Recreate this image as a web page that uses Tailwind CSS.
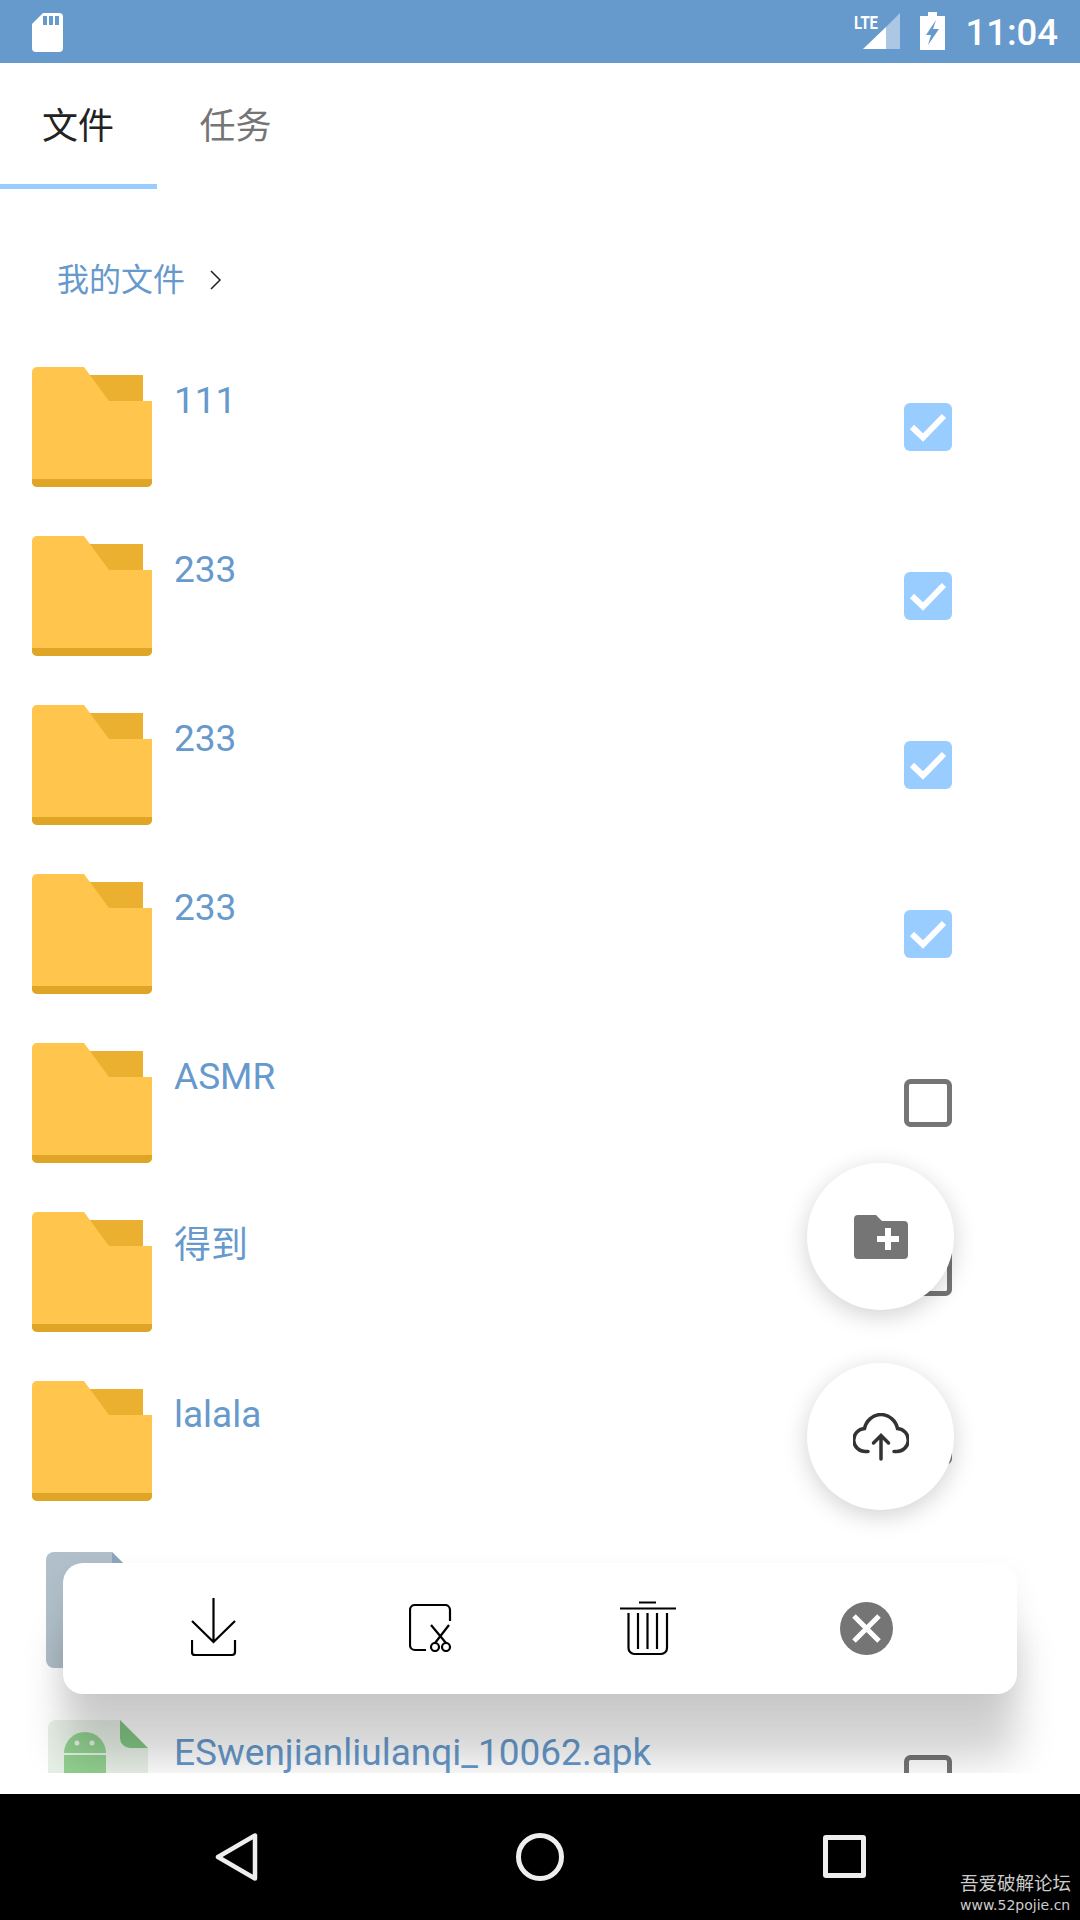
<!DOCTYPE html>
<html lang="en">
  <head>
    <meta charset="UTF-8" />
    <title>文件</title>
    <script src="https://cdn.jsdelivr.net/npm/@tailwindcss/browser@4"></script>
  </head>
  <body class="bg-white font-['Roboto','Noto_Sans_CJK_SC',sans-serif]">
    <!-- shared icons -->
    <svg class="hidden">
      <symbol id="folder" viewBox="0 0 120 120">
        <path d="M58 8H111V40H58Z" fill="#ebb02f" />
        <path d="M5 0H52L77 34H120V115a5 5 0 0 1-5 5H5a5 5 0 0 1-5-5V5a5 5 0 0 1 5-5Z" fill="#ffc54d" />
        <path d="M0 112H120V115a5 5 0 0 1-5 5H5a5 5 0 0 1-5-5Z" fill="#dea527" />
      </symbol>
      <symbol id="checked" viewBox="0 0 48 48">
        <rect width="48" height="48" rx="6" fill="#99ccff" />
        <path d="M8 24L19 34.500L40 13" fill="none" stroke="#fff" stroke-width="6" />
      </symbol>
      <symbol id="unchecked" viewBox="0 0 48 48">
        <rect x="2.500" y="2.500" width="43" height="43" rx="4" fill="#fff" stroke="#757575" stroke-width="5" />
      </symbol>
    </svg>

    <div class="relative w-[1080px] h-[1920px] flex flex-col overflow-hidden">
      <!-- status bar -->
      <div class="h-[63px] bg-[#6699cc] flex items-start relative shrink-0">
        <svg class="ml-[32px] mt-[13px]" width="31" height="39" viewBox="0 0 31 39">
          <path d="M11 0H27a4 4 0 0 1 4 4V35a4 4 0 0 1-4 4H4a4 4 0 0 1-4-4V11Z" fill="#fff" />
          <path d="M11 3h4v9h-4zM17 3h4v9h-4zM23 3h4v9h-4z" fill="#6699cc" />
        </svg>
        <svg class="ml-auto mt-[12px]" width="48" height="38" viewBox="0 0 48 38">
          <text x="1" y="17" font-family="Roboto" font-weight="700" font-size="19" fill="#fff" textLength="24" lengthAdjust="spacingAndGlyphs">LTE</text>
          <path d="M47 1V37H33V15Z" fill="#fff" fill-opacity=".45" />
          <path d="M10 37L33 15V37Z" fill="#fff" />
        </svg>
        <svg class="ml-[19px] mt-[12px]" width="25" height="38" viewBox="0 0 25 38">
          <path d="M8 0H17V4H25V38H0V4H8Z" fill="#fff" />
          <path d="M16 8L6 23H11L8 33L19 17H13Z" fill="#6699cc" />
        </svg>
        <span class="ml-[20px] mr-[22px] mt-[11px] text-white text-[36.500px] leading-[44px] font-medium">11:04</span>
      </div>

      <!-- tabs -->
      <div class="h-[126px] flex shrink-0">
        <div class="w-[157px] h-full border-b-[5px] border-[#99ccff] pt-[42px] pr-[1px] text-center text-[36px] leading-[44px] text-[#222222]">文件</div>
        <div class="w-[157px] h-full pt-[42px] text-center text-[36px] leading-[44px] text-[#757575]">任务</div>
      </div>

      <!-- breadcrumb -->
      <div class="h-[178px] pl-[57px] pt-[70px] flex items-start shrink-0">
        <span class="text-[32px] leading-[42px] text-[#6699cc]">我的文件</span>
        <svg class="ml-[24px] mt-[11px]" width="14" height="20" viewBox="0 0 14 20">
          <path d="M2 1L11 10L2 19" fill="none" stroke="#222" stroke-width="1.500" />
        </svg>
      </div>

      <!-- file list -->
      <div class="h-[1406px] overflow-hidden shrink-0">
        <div class="h-[169px] pl-[32px] pr-[128px] flex items-start">
          <svg class="w-[120px] h-[120px]"><use href="#folder" /></svg>
          <span class="ml-[22px] mt-[12px] text-[37px] leading-[44px] text-[#6699cc]">111</span>
          <svg class="ml-auto mt-[36px] w-[48px] h-[48px]"><use href="#checked" /></svg>
        </div>
        <div class="h-[169px] pl-[32px] pr-[128px] flex items-start">
          <svg class="w-[120px] h-[120px]"><use href="#folder" /></svg>
          <span class="ml-[22px] mt-[12px] text-[37px] leading-[44px] text-[#6699cc]">233</span>
          <svg class="ml-auto mt-[36px] w-[48px] h-[48px]"><use href="#checked" /></svg>
        </div>
        <div class="h-[169px] pl-[32px] pr-[128px] flex items-start">
          <svg class="w-[120px] h-[120px]"><use href="#folder" /></svg>
          <span class="ml-[22px] mt-[12px] text-[37px] leading-[44px] text-[#6699cc]">233</span>
          <svg class="ml-auto mt-[36px] w-[48px] h-[48px]"><use href="#checked" /></svg>
        </div>
        <div class="h-[169px] pl-[32px] pr-[128px] flex items-start">
          <svg class="w-[120px] h-[120px]"><use href="#folder" /></svg>
          <span class="ml-[22px] mt-[12px] text-[37px] leading-[44px] text-[#6699cc]">233</span>
          <svg class="ml-auto mt-[36px] w-[48px] h-[48px]"><use href="#checked" /></svg>
        </div>
        <div class="h-[169px] pl-[32px] pr-[128px] flex items-start">
          <svg class="w-[120px] h-[120px]"><use href="#folder" /></svg>
          <span class="ml-[22px] mt-[12px] text-[37px] leading-[44px] text-[#6699cc]">ASMR</span>
          <svg class="ml-auto mt-[36px] w-[48px] h-[48px]"><use href="#unchecked" /></svg>
        </div>
        <div class="h-[169px] pl-[32px] pr-[128px] flex items-start">
          <svg class="w-[120px] h-[120px]"><use href="#folder" /></svg>
          <span class="ml-[22px] mt-[12px] text-[37px] leading-[44px] text-[#6699cc]">得到</span>
          <svg class="ml-auto mt-[36px] w-[48px] h-[48px]"><use href="#unchecked" /></svg>
        </div>
        <div class="h-[169px] pl-[32px] pr-[128px] flex items-start">
          <svg class="w-[120px] h-[120px]"><use href="#folder" /></svg>
          <span class="ml-[22px] mt-[12px] text-[37px] leading-[44px] text-[#6699cc]">lalala</span>
          <svg class="ml-auto mt-[36px] w-[48px] h-[48px]"><use href="#unchecked" /></svg>
        </div>
        <div class="h-[169px] pl-[46px] pr-[128px] flex items-start">
          <svg class="mt-[2px]" width="106" height="116" viewBox="0 0 106 116">
            <path d="M8 0H66L100 34V108a8 8 0 0 1-8 8H8a8 8 0 0 1-8-8V8a8 8 0 0 1 8-8Z" fill="#b0bfc9" />
            <path d="M66 0L78 12H66Z" fill="#8ea6bd" />
          </svg>
          <svg class="ml-auto mt-[36px] w-[48px] h-[48px]"><use href="#unchecked" /></svg>
        </div>
        <div class="h-[169px] pl-[48px] pr-[128px] flex items-start">
          <svg class="mt-[1px] shrink-0" width="100" height="120" viewBox="0 0 100 120">
            <path d="M8 0H72L100 28V120H0V8a8 8 0 0 1 8-8Z" fill="#e8f1e8" />
            <path d="M72 0L100 28H82a10 10 0 0 1-10-10Z" fill="#82c785" />
            <path d="M16 33a21 21 0 0 1 42 0Z" fill="#92d18f" />
            <path d="M16 35H58V120H16Z" fill="#92d18f" />
            <circle cx="29" cy="23" r="2.500" fill="#e8f1e8" />
            <circle cx="44" cy="23" r="2.500" fill="#e8f1e8" />
          </svg>
          <span class="ml-[26px] mt-[12px] text-[37px] leading-[44px] text-[#6699cc]">ESwenjianliulanqi_10062.apk</span>
          <svg class="ml-auto mt-[36px] w-[48px] h-[48px]"><use href="#unchecked" /></svg>
        </div>
      </div>

      <!-- floating buttons -->
      <div class="absolute left-[807px] top-[1163px] w-[147px] h-[147px] rounded-full bg-white shadow-[0_6px_24px_rgba(0,0,0,0.18)] flex items-center justify-center">
        <svg width="54" height="44" viewBox="0 0 54 44">
          <path d="M4 0H22L28 6H50a4 4 0 0 1 4 4V40a4 4 0 0 1-4 4H4a4 4 0 0 1-4-4V4a4 4 0 0 1 4-4Z" fill="#757575" />
          <path d="M31 13h6v8h8v6h-8v8h-6v-8h-8v-6h8Z" fill="#fff" />
        </svg>
      </div>
      <div class="absolute left-[807px] top-[1363px] w-[147px] h-[147px] rounded-full bg-white shadow-[0_6px_24px_rgba(0,0,0,0.18)] flex items-center justify-center">
        <svg width="56" height="48" viewBox="0 0 56 48">
          <path d="M15 38.500H13a11.500 11.500 0 0 1-1.500-23C13 8 20 1.500 28 1.500s15 6.500 16.500 14a11.500 11.500 0 0 1-1.500 23H41" fill="none" stroke="#333" stroke-width="3.500" stroke-linecap="round" />
          <path d="M28 46V23M20.500 30L28 22.500L35.500 30" fill="none" stroke="#333" stroke-width="3.500" stroke-linecap="round" />
        </svg>
      </div>

      <div class="absolute left-[21px] top-[1540px] w-[1037px] h-[233px] overflow-hidden">
        <div class="absolute left-[42px] top-[23px] w-[954px] h-[131px] rounded-[20px] bg-white shadow-[0_10px_30px_rgba(0,0,0,0.06),0_65px_40px_rgba(0,0,0,0.18)]"></div>
      </div>
      <div class="absolute left-[63px] top-[1563px] w-[954px] h-[131px] flex items-start">
        <svg class="ml-[128px] mt-[35px]" width="46" height="59" viewBox="0 0 46 59">
          <path d="M22.500 0V44M1 23L22.500 44L44 23M1 42V54a3 3 0 0 0 3 3H41a3 3 0 0 0 3-3V42" fill="none" stroke="#000" stroke-width="2.200" />
        </svg>
        <svg class="ml-[172px] mt-[41px]" width="44" height="48" viewBox="0 0 44 48">
          <path d="M41 17V6a5 5 0 0 0-5-5H6a5 5 0 0 0-5 5V41a5 5 0 0 0 5 5H17" fill="none" stroke="#000" stroke-width="2.200" />
          <path d="M22 21L37 39M40 21L26 39" fill="none" stroke="#000" stroke-width="2.200" />
          <circle cx="26" cy="43" r="4" fill="none" stroke="#000" stroke-width="2.200" />
          <circle cx="37" cy="43" r="4" fill="none" stroke="#000" stroke-width="2.200" />
        </svg>
        <svg class="ml-[167px] mt-[38px]" width="56" height="55" viewBox="0 0 56 55">
          <path d="M19 1.500H36M0 7.500H56M8.500 12V47a6 6 0 0 0 6 6H41a6 6 0 0 0 6-6V12M18 12V48M27.500 12V48M37 12V48" fill="none" stroke="#000" stroke-width="2.200" />
        </svg>
        <svg class="ml-[164px] mt-[39px]" width="53" height="53" viewBox="0 0 53 53">
          <circle cx="26.500" cy="26.500" r="26.500" fill="#757575" />
          <path d="M14 14L39 39M39 14L14 39" stroke="#fff" stroke-width="5" />
        </svg>
      </div>

      <!-- nav bar -->
      <div class="absolute left-0 top-[1794px] w-full h-[126px] bg-black">
        <svg class="absolute left-[214px] top-[36px]" width="46" height="54" viewBox="0 0 46 54">
          <path d="M4 27L41 5.500V48.500Z" fill="none" stroke="#eeeeee" stroke-width="4.500" stroke-linejoin="round" />
        </svg>
        <div class="absolute left-[516px] top-[39px] w-[48px] h-[48px] rounded-full border-[5px] border-[#eeeeee]"></div>
        <div class="absolute left-[823px] top-[41px] w-[43px] h-[43px] rounded-[3px] border-[5px] border-[#eeeeee]"></div>
        <div class="absolute left-[960px] top-[78px] w-[112px] text-[#cccccc] font-['DejaVu_Sans','Noto_Sans_CJK_SC',sans-serif]">
          <div class="text-[18.500px] leading-[24px] whitespace-nowrap">吾爱破解论坛</div>
          <div class="text-[14px] leading-[18px] whitespace-nowrap">www.52pojie.cn</div>
        </div>
      </div>
    </div>
  </body>
</html>
